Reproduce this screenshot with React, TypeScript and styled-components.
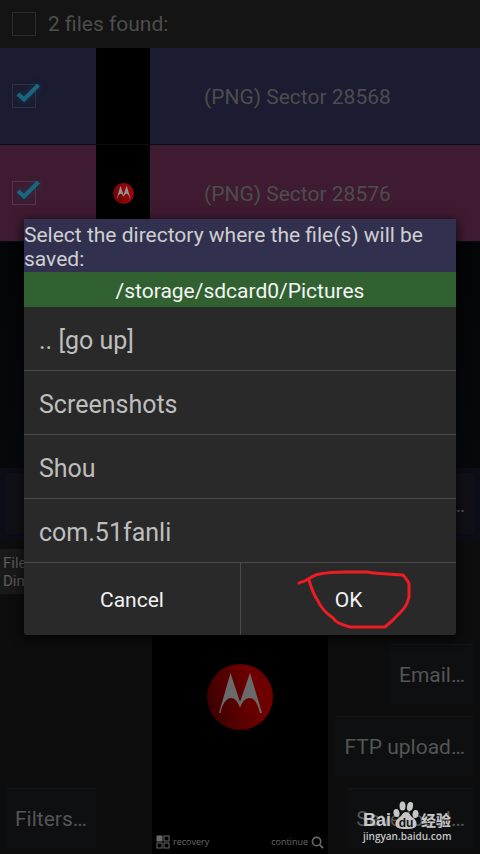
import React from 'react';
import styled, { createGlobalStyle } from 'styled-components';

const GlobalStyle = createGlobalStyle`
  * { box-sizing: border-box; }
  body { margin: 0; background: #050607; font-family: Roboto, "Noto Sans CJK SC", sans-serif; }
  button, input { font-family: inherit; margin: 0; }
`;

const Page = styled.main`
  position: relative;
  display: flex;
  flex-direction: column;
  min-height: 100vh;
  overflow: hidden;
  color: #4d4d4d;
`;

const SelectAll = styled.label`
  display: flex;
  align-items: center;
  gap: 12px;
  height: 48px;
  padding: 0 12px;
  background: #141414;
  font-size: 21px;
`;

const CheckWrap = styled.span`
  position: relative;
  display: block;
  width: 24px;
  height: 24px;
`;

const CheckInput = styled.input<{ $edge: string }>`
  appearance: none;
  display: block;
  width: 24px;
  height: 24px;
  border: 1px solid ${(p) => p.$edge};
`;

const Tick = styled.svg`
  position: absolute;
  left: 0;
  top: -4px;
  width: 32px;
  height: 28px;
  overflow: visible;
  pointer-events: none;
  filter: drop-shadow(0 0 3px #123f56);
`;

const FileRow = styled.label<{ $tone: string }>`
  display: grid;
  grid-template-columns: 84px 54px 1fr;
  align-items: center;
  height: 97px;
  padding-left: 12px;
  border-bottom: 1px solid #0c0c10;
  background: ${(p) => p.$tone};
  font-size: 21px;
`;

const Thumb = styled.span`
  display: flex;
  align-items: center;
  justify-content: center;
  height: 96px;
  background: #000;
`;

const FileName = styled.span`
  padding: 2px 0 0 54px;
`;

const ListSpace = styled.div`
  flex: 1;
  background: linear-gradient(#040506, #07080a);
`;

const ActionBar = styled.div`
  display: grid;
  grid-template-columns: 1fr 1fr;
  gap: 12px;
  height: 72px;
  padding: 6px;
  background: #0d0d18;
`;

const DarkButton = styled.button<{ $tint?: string; $align?: string }>`
  height: 60px;
  padding: 1px 9px 0;
  border: 0;
  border-top: 1px solid #141516;
  border-radius: 2px;
  background: ${(p) => p.$tint || '#0d0f10'};
  color: #555;
  font-size: 21px;
  text-align: ${(p) => p.$align || 'center'};
  white-space: nowrap;
`;

const Viewer = styled.section`
  display: grid;
  grid-template-columns: 1fr 176px 1fr;
  height: 314px;
  background: #0d0d0d;
`;

const SideColumn = styled.div<{ $end?: boolean }>`
  display: flex;
  flex-direction: column;
  justify-content: ${(p) => (p.$end ? 'flex-end' : 'space-between')};
  align-items: ${(p) => (p.$end ? 'flex-end' : 'flex-start')};
  gap: 12px;
  padding: ${(p) => (p.$end ? '0 6px 6px 0' : '9px 0 6px 0')};
  button { margin-left: ${(p) => (p.$end ? '0' : '6px')}; }
`;

const FileInfo = styled.p`
  margin: 0;
  width: 100%;
  padding: 5px 3px;
  height: 45px;
  background: #191919;
  color: #5c5c5c;
  font-size: 15px;
  line-height: 18px;
  white-space: nowrap;
  overflow: hidden;
`;

const Preview = styled.figure`
  display: flex;
  flex-direction: column;
  align-items: center;
  justify-content: space-between;
  margin: 0;
  padding: 124px 4px 4px;
  background: #000;
`;

const PreviewHints = styled.figcaption`
  display: flex;
  justify-content: space-between;
  width: 100%;
  color: #686868;
  font-family: "Open Sans", sans-serif;
  font-size: 9px;
  line-height: 16px;
`;

const Hint = styled.span`
  display: flex;
  align-items: center;
  gap: 3px;
`;

const Overlay = styled.div`
  position: absolute;
  inset: 0;
  display: flex;
  align-items: center;
  padding: 0 24px;
`;

const Dialog = styled.section`
  width: 100%;
  border-radius: 0 0 3px 3px;
  background: #292929;
  box-shadow: 0 3px 12px 2px rgba(0, 0, 0, 0.6);
  overflow: hidden;
`;

const DialogTitle = styled.h1`
  margin: 0;
  padding: 4px 0 1px;
  background: #31314f;
  color: #cfcfcf;
  font-size: 21px;
  font-weight: 400;
  line-height: 24px;
`;

const CurrentPath = styled.div`
  height: 35px;
  background: #316131;
  color: #f5f5f5;
  font-size: 21px;
  line-height: 38px;
  text-align: center;
`;

const FolderList = styled.ul`
  margin: 0;
  padding: 0;
  list-style: none;
`;

const FolderButton = styled.button`
  display: block;
  width: 100%;
  height: 64px;
  padding: 3px 15px 0;
  border: 0;
  border-bottom: 1px solid #4b4b4b;
  background: none;
  color: #bebebe;
  font-size: 25px;
  text-align: left;
`;

const DialogActions = styled.div`
  display: grid;
  grid-template-columns: 1fr 1fr;
`;

const ActionSlot = styled.div`
  position: relative;
  display: grid;
  & + & { border-left: 1px solid #4b4b4b; }
`;

const DialogButton = styled.button`
  height: 72px;
  padding: 2px 0 0;
  border: 0;
  background: none;
  color: #f2f2f2;
  font-size: 21px;
`;

const Scribble = styled.svg`
  position: absolute;
  left: 50%;
  top: 0;
  width: 120px;
  height: 72px;
  margin-left: -54px;
  pointer-events: none;
`;

const Watermark = styled.div`
  position: absolute;
  right: 29px;
  bottom: 11px;
  width: 88px;
  color: #c6c6c6;
  font-family: "Open Sans", "Noto Sans CJK SC", sans-serif;
`;

const Brand = styled.div`
  display: flex;
  align-items: flex-end;
  justify-content: space-between;
  height: 29px;
  font-family: "Liberation Sans", "Noto Sans CJK SC", sans-serif;
  font-size: 18px;
  font-weight: 700;
  line-height: 18px;
`;

const BrandCn = styled.span`
  font-family: "Noto Sans CJK SC", sans-serif;
  font-size: 15px;
  line-height: 18px;
`;

const Site = styled.div`
  font-size: 10px;
  font-weight: 600;
  line-height: 14px;
  white-space: nowrap;
`;

function Check({ label, checked, edge }: { label: string; checked?: boolean; edge: string }) {
  return (
    <CheckWrap>
      <CheckInput type="checkbox" aria-label={label} defaultChecked={checked} $edge={edge} />
      {checked && (
        <Tick viewBox="0 0 32 28" aria-hidden="true">
          <path d="M6 14 L12 19.500 L26.500 5" fill="none" stroke="#1b6580" strokeWidth="4" />
        </Tick>
      )}
    </CheckWrap>
  );
}

function Emblem({ size, id, red, ink }: { size: number; id: string; red: [string, string]; ink: string }) {
  return (
    <svg width={size} height={size} viewBox="0 0 66 66" aria-hidden="true">
      <defs>
        <linearGradient id={id} x1="0" y1="0.600" x2="1" y2="0.300">
          <stop offset="0" stopColor={red[0]} />
          <stop offset="0.700" stopColor={red[1]} />
        </linearGradient>
      </defs>
      <circle cx="33" cy="33" r="33" fill={`url(#${id})`} />
      <path
        d="M12 49 L23.500 9 L33 38 L43 9 L55 49 H53 C51 41 48 34 43 34 C38 34 35 38 33 44 C31 38 28 34 24 34 C19 34 15 41 13.500 49 Z"
        fill={ink}
      />
    </svg>
  );
}

const folders = ['.. [go up]', 'Screenshots', 'Shou', 'com.51fanli'];

export default function App() {
  return (
    <>
      <GlobalStyle />
      <Page>
        <SelectAll>
          <Check label="Select all files" edge="#2b2b2b" />
          2 files found:
        </SelectAll>
        <FileRow $tone="#1b1b31">
          <Check label="Sector 28568" checked edge="#30303f" />
          <Thumb />
          <FileName>(PNG) Sector 28568</FileName>
        </FileRow>
        <FileRow $tone="#3f1b31">
          <Check label="Sector 28576" checked edge="#57304a" />
          <Thumb>
            <Emblem size={21} id="thumbRed" red={['#6c0505', '#960808']} ink="#949494" />
          </Thumb>
          <FileName>(PNG) Sector 28576</FileName>
        </FileRow>
        <ListSpace />
        <ActionBar>
          <DarkButton $tint="#101016">Save…</DarkButton>
          <DarkButton $tint="#101016" $align="right">Options…</DarkButton>
        </ActionBar>
        <Viewer>
          <SideColumn>
            <FileInfo>
              File size: 58 KB
              <br />
              Dimensions: 540x960
            </FileInfo>
            <DarkButton>Filters…</DarkButton>
          </SideColumn>
          <Preview>
            <Emblem size={66} id="previewRed" red={['#3c0000', '#6e0000']} ink="#6a6a6a" />
            <PreviewHints>
              <Hint>
                <svg width="14" height="14" viewBox="0 0 14 14" fill="none" stroke="#686868" aria-hidden="true">
                  <rect x="1" y="1" width="5" height="5" fill="#686868" />
                  <rect x="8" y="1" width="5" height="5" />
                  <rect x="1" y="8" width="5" height="5" />
                  <rect x="8" y="8" width="5" height="5" />
                </svg>
                recovery
              </Hint>
              <Hint>
                continue
                <svg width="13" height="13" viewBox="0 0 14 14" fill="none" stroke="#686868" aria-hidden="true">
                  <circle cx="6" cy="6" r="4.500" strokeWidth="1.700" />
                  <path d="M9.500 9.500 L13 13" strokeWidth="2" />
                </svg>
              </Hint>
            </PreviewHints>
          </Preview>
          <SideColumn $end>
            <DarkButton>Email…</DarkButton>
            <DarkButton>FTP upload…</DarkButton>
            <DarkButton>Save local…</DarkButton>
          </SideColumn>
        </Viewer>

        <Overlay>
          <Dialog role="dialog" aria-labelledby="dialogTitle">
            <DialogTitle id="dialogTitle">Select the directory where the file(s) will be saved:</DialogTitle>
            <CurrentPath>/storage/sdcard0/Pictures</CurrentPath>
            <FolderList>
              {folders.map((name) => (
                <li key={name}>
                  <FolderButton type="button">{name}</FolderButton>
                </li>
              ))}
            </FolderList>
            <DialogActions>
              <ActionSlot>
                <DialogButton type="button">Cancel</DialogButton>
              </ActionSlot>
              <ActionSlot>
                <DialogButton type="button">OK</DialogButton>
                <Scribble viewBox="0 0 120 72" aria-hidden="true">
                  <path
                    d="M4 20 C8 18 10 19 13 16 C17 15 19 11 25 11 C34 9 42 9 50 9 L72 9 C84 11 96 11 108 12 C111 16 114 18 114 22 V34 C112 45 104 50 98 57 L90 64 H55 C47 62 41 60 38 55 C31 50 26 45 23 38 C18 31 16 24 14 17"
                    fill="none"
                    stroke="#ee1c24"
                    strokeWidth="3"
                    strokeLinecap="round"
                    strokeLinejoin="round"
                  />
                </Scribble>
              </ActionSlot>
            </DialogActions>
          </Dialog>
        </Overlay>

        <Watermark>
          <Brand>
            <span>Bai</span>
            <svg width="26" height="28" viewBox="0 0 26 28" aria-hidden="true">
              <g fill="#c6c6c6">
                <ellipse cx="3.500" cy="12" rx="3" ry="4" transform="rotate(-12 3.500 12)" />
                <ellipse cx="9.500" cy="5" rx="3" ry="4.500" />
                <ellipse cx="17" cy="5.500" rx="3" ry="4.500" transform="rotate(12 17 5.500)" />
                <ellipse cx="22.500" cy="13" rx="3" ry="4" transform="rotate(10 22.500 13)" />
                <path d="M13 11 C16 11 17 14 19 16 C22 18.500 24 20 23.500 23.500 C23 27 20 28 13 28 C6 28 3 27 2.500 23.500 C2 20 4 18.500 7 16 C9 14 10 11 13 11 Z" />
              </g>
              <text x="13" y="26" textAnchor="middle" fontSize="12" fill="#111">du</text>
            </svg>
            <BrandCn>经验</BrandCn>
          </Brand>
          <Site>jingyan.baidu.com</Site>
        </Watermark>
      </Page>
    </>
  );
}
